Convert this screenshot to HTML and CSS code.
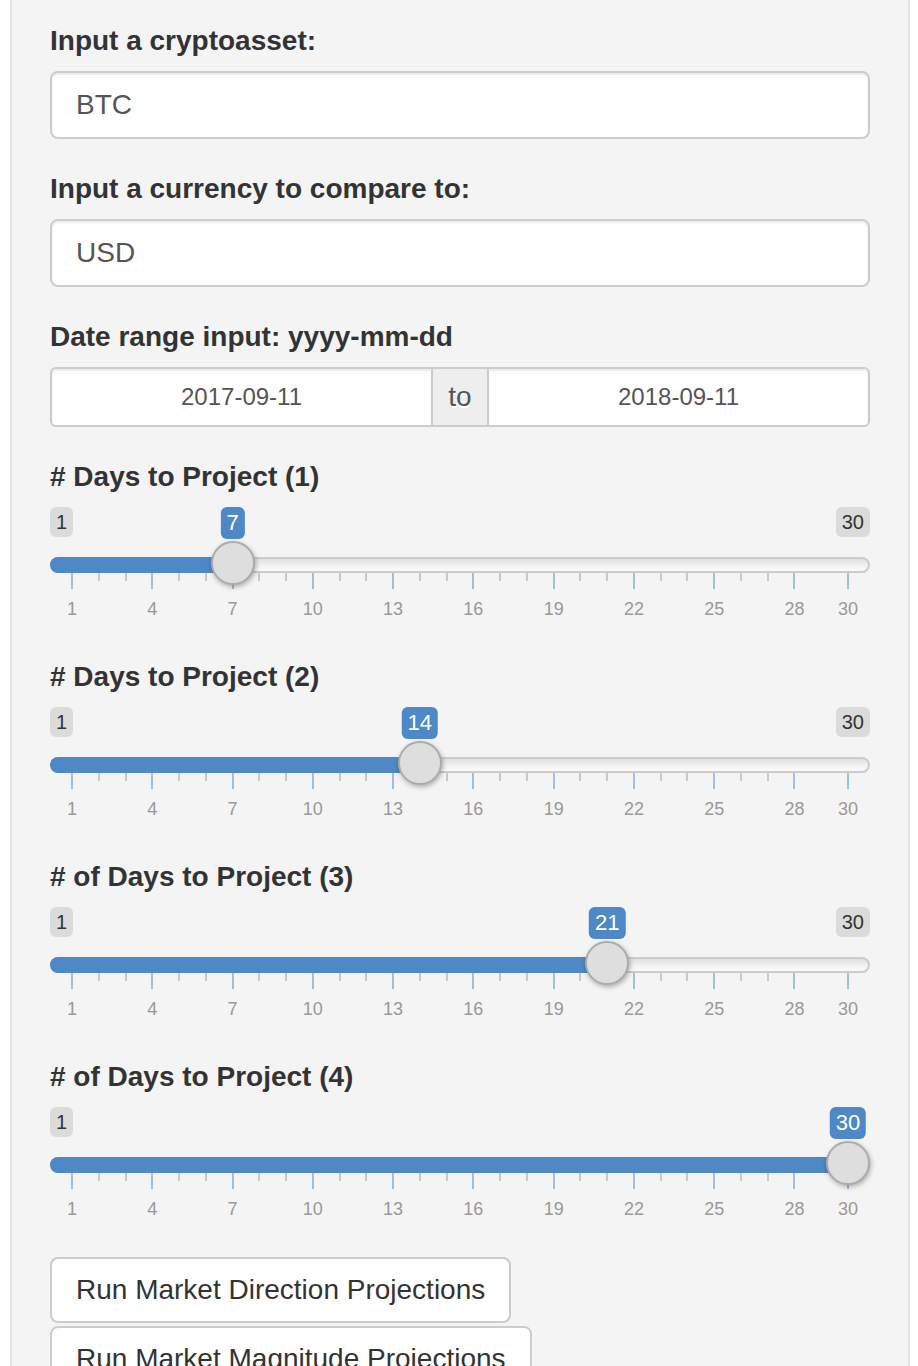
FILE: index.html
```html
<!DOCTYPE html>
<html lang="en">
<head>
<meta charset="utf-8">
<title>Crypto projections</title>
<link rel="stylesheet" href="styles.css">
</head>
<body>
<div class="well">
  <div class="form-group">
    <label class="control-label">Input a cryptoasset:</label>
    <div class="form-control">BTC</div>
  </div>
  <div class="form-group">
    <label class="control-label">Input a currency to compare to:</label>
    <div class="form-control">USD</div>
  </div>
  <div class="form-group">
    <label class="control-label">Date range input: yyyy-mm-dd</label>
    <div class="input-daterange">
      <div class="dr-input dr-first">2017-09-11</div>
      <span class="addon">to</span>
      <div class="dr-input dr-last">2018-09-11</div>
    </div>
  </div>

  <div class="form-group">
    <label class="control-label"># Days to Project (1)</label>
    <div class="irs" style="--v:7">
      <span class="irs-line"></span>
      <span class="irs-bar"></span>
      <span class="irs-min">1</span>
      <span class="irs-max">30</span>
      <span class="irs-grid">
        <span class="pol" style="--v:1"></span><span class="pol small" style="--v:2"></span><span class="pol small" style="--v:3"></span>
        <span class="pol" style="--v:4"></span><span class="pol small" style="--v:5"></span><span class="pol small" style="--v:6"></span>
        <span class="pol" style="--v:7"></span><span class="pol small" style="--v:8"></span><span class="pol small" style="--v:9"></span>
        <span class="pol" style="--v:10"></span><span class="pol small" style="--v:11"></span><span class="pol small" style="--v:12"></span>
        <span class="pol" style="--v:13"></span><span class="pol small" style="--v:14"></span><span class="pol small" style="--v:15"></span>
        <span class="pol" style="--v:16"></span><span class="pol small" style="--v:17"></span><span class="pol small" style="--v:18"></span>
        <span class="pol" style="--v:19"></span><span class="pol small" style="--v:20"></span><span class="pol small" style="--v:21"></span>
        <span class="pol" style="--v:22"></span><span class="pol small" style="--v:23"></span><span class="pol small" style="--v:24"></span>
        <span class="pol" style="--v:25"></span><span class="pol small" style="--v:26"></span><span class="pol small" style="--v:27"></span>
        <span class="pol" style="--v:28"></span><span class="pol" style="--v:30"></span>
        <span class="gt" style="--v:1">1</span><span class="gt" style="--v:4">4</span><span class="gt" style="--v:7">7</span>
        <span class="gt" style="--v:10">10</span><span class="gt" style="--v:13">13</span><span class="gt" style="--v:16">16</span>
        <span class="gt" style="--v:19">19</span><span class="gt" style="--v:22">22</span><span class="gt" style="--v:25">25</span>
        <span class="gt" style="--v:28">28</span><span class="gt" style="--v:30">30</span>
      </span>
      <span class="irs-slider"></span>
      <span class="irs-single">7</span>
    </div>
  </div>

  <div class="form-group">
    <label class="control-label"># Days to Project (2)</label>
    <div class="irs" style="--v:14">
      <span class="irs-line"></span>
      <span class="irs-bar"></span>
      <span class="irs-min">1</span>
      <span class="irs-max">30</span>
      <span class="irs-grid">
        <span class="pol" style="--v:1"></span><span class="pol small" style="--v:2"></span><span class="pol small" style="--v:3"></span>
        <span class="pol" style="--v:4"></span><span class="pol small" style="--v:5"></span><span class="pol small" style="--v:6"></span>
        <span class="pol" style="--v:7"></span><span class="pol small" style="--v:8"></span><span class="pol small" style="--v:9"></span>
        <span class="pol" style="--v:10"></span><span class="pol small" style="--v:11"></span><span class="pol small" style="--v:12"></span>
        <span class="pol" style="--v:13"></span><span class="pol small" style="--v:14"></span><span class="pol small" style="--v:15"></span>
        <span class="pol" style="--v:16"></span><span class="pol small" style="--v:17"></span><span class="pol small" style="--v:18"></span>
        <span class="pol" style="--v:19"></span><span class="pol small" style="--v:20"></span><span class="pol small" style="--v:21"></span>
        <span class="pol" style="--v:22"></span><span class="pol small" style="--v:23"></span><span class="pol small" style="--v:24"></span>
        <span class="pol" style="--v:25"></span><span class="pol small" style="--v:26"></span><span class="pol small" style="--v:27"></span>
        <span class="pol" style="--v:28"></span><span class="pol" style="--v:30"></span>
        <span class="gt" style="--v:1">1</span><span class="gt" style="--v:4">4</span><span class="gt" style="--v:7">7</span>
        <span class="gt" style="--v:10">10</span><span class="gt" style="--v:13">13</span><span class="gt" style="--v:16">16</span>
        <span class="gt" style="--v:19">19</span><span class="gt" style="--v:22">22</span><span class="gt" style="--v:25">25</span>
        <span class="gt" style="--v:28">28</span><span class="gt" style="--v:30">30</span>
      </span>
      <span class="irs-slider"></span>
      <span class="irs-single">14</span>
    </div>
  </div>

  <div class="form-group">
    <label class="control-label"># of Days to Project (3)</label>
    <div class="irs" style="--v:21">
      <span class="irs-line"></span>
      <span class="irs-bar"></span>
      <span class="irs-min">1</span>
      <span class="irs-max">30</span>
      <span class="irs-grid">
        <span class="pol" style="--v:1"></span><span class="pol small" style="--v:2"></span><span class="pol small" style="--v:3"></span>
        <span class="pol" style="--v:4"></span><span class="pol small" style="--v:5"></span><span class="pol small" style="--v:6"></span>
        <span class="pol" style="--v:7"></span><span class="pol small" style="--v:8"></span><span class="pol small" style="--v:9"></span>
        <span class="pol" style="--v:10"></span><span class="pol small" style="--v:11"></span><span class="pol small" style="--v:12"></span>
        <span class="pol" style="--v:13"></span><span class="pol small" style="--v:14"></span><span class="pol small" style="--v:15"></span>
        <span class="pol" style="--v:16"></span><span class="pol small" style="--v:17"></span><span class="pol small" style="--v:18"></span>
        <span class="pol" style="--v:19"></span><span class="pol small" style="--v:20"></span><span class="pol small" style="--v:21"></span>
        <span class="pol" style="--v:22"></span><span class="pol small" style="--v:23"></span><span class="pol small" style="--v:24"></span>
        <span class="pol" style="--v:25"></span><span class="pol small" style="--v:26"></span><span class="pol small" style="--v:27"></span>
        <span class="pol" style="--v:28"></span><span class="pol" style="--v:30"></span>
        <span class="gt" style="--v:1">1</span><span class="gt" style="--v:4">4</span><span class="gt" style="--v:7">7</span>
        <span class="gt" style="--v:10">10</span><span class="gt" style="--v:13">13</span><span class="gt" style="--v:16">16</span>
        <span class="gt" style="--v:19">19</span><span class="gt" style="--v:22">22</span><span class="gt" style="--v:25">25</span>
        <span class="gt" style="--v:28">28</span><span class="gt" style="--v:30">30</span>
      </span>
      <span class="irs-slider"></span>
      <span class="irs-single">21</span>
    </div>
  </div>

  <div class="form-group">
    <label class="control-label"># of Days to Project (4)</label>
    <div class="irs" style="--v:30">
      <span class="irs-line"></span>
      <span class="irs-bar"></span>
      <span class="irs-min">1</span>
      <span class="irs-grid">
        <span class="pol" style="--v:1"></span><span class="pol small" style="--v:2"></span><span class="pol small" style="--v:3"></span>
        <span class="pol" style="--v:4"></span><span class="pol small" style="--v:5"></span><span class="pol small" style="--v:6"></span>
        <span class="pol" style="--v:7"></span><span class="pol small" style="--v:8"></span><span class="pol small" style="--v:9"></span>
        <span class="pol" style="--v:10"></span><span class="pol small" style="--v:11"></span><span class="pol small" style="--v:12"></span>
        <span class="pol" style="--v:13"></span><span class="pol small" style="--v:14"></span><span class="pol small" style="--v:15"></span>
        <span class="pol" style="--v:16"></span><span class="pol small" style="--v:17"></span><span class="pol small" style="--v:18"></span>
        <span class="pol" style="--v:19"></span><span class="pol small" style="--v:20"></span><span class="pol small" style="--v:21"></span>
        <span class="pol" style="--v:22"></span><span class="pol small" style="--v:23"></span><span class="pol small" style="--v:24"></span>
        <span class="pol" style="--v:25"></span><span class="pol small" style="--v:26"></span><span class="pol small" style="--v:27"></span>
        <span class="pol" style="--v:28"></span><span class="pol" style="--v:30"></span>
        <span class="gt" style="--v:1">1</span><span class="gt" style="--v:4">4</span><span class="gt" style="--v:7">7</span>
        <span class="gt" style="--v:10">10</span><span class="gt" style="--v:13">13</span><span class="gt" style="--v:16">16</span>
        <span class="gt" style="--v:19">19</span><span class="gt" style="--v:22">22</span><span class="gt" style="--v:25">25</span>
        <span class="gt" style="--v:28">28</span><span class="gt" style="--v:30">30</span>
      </span>
      <span class="irs-slider"></span>
      <span class="irs-single">30</span>
    </div>
  </div>

  <div class="actions">
    <button class="btn" type="button">Run Market Direction Projections</button>
    <button class="btn" type="button">Run Market Magnitude Projections</button>
  </div>
</div>
</body>
</html>
```

FILE: styles.css
```css
html, body {
  margin: 0;
  padding: 0;
  background: #ffffff;
}

body {
  font-family: "Liberation Sans", Arial, Helvetica, sans-serif;
  color: #333333;
}

.well {
  margin: 0 8px 0 10px;
  padding: 21px 38px 0 38px;
  background: #f4f4f4;
  border: 2px solid #e3e3e3;
  border-top: none;
  min-height: 1500px;
  box-sizing: border-box;
}

.form-group {
  margin-bottom: 30px;
}

.control-label {
  display: block;
  font-weight: bold;
  font-size: 28px;
  line-height: 40px;
  margin-bottom: 10px;
  color: #333333;
}

.form-control {
  box-sizing: border-box;
  height: 68px;
  padding: 0 24px;
  line-height: 64px;
  font-size: 28px;
  color: #555555;
  background: #ffffff;
  border: 2px solid #cccccc;
  border-radius: 8px;
  box-shadow: inset 0 2px 2px rgba(0, 0, 0, 0.075);
}

/* date range */
.input-daterange {
  display: flex;
  height: 60px;
}

.dr-input {
  flex: 1;
  box-sizing: border-box;
  height: 60px;
  line-height: 56px;
  text-align: center;
  font-size: 24px;
  color: #555555;
  background: #ffffff;
  border: 2px solid #cccccc;
  box-shadow: inset 0 2px 2px rgba(0, 0, 0, 0.075);
}

.dr-first {
  border-right: none;
  border-radius: 6px 0 0 6px;
}

.dr-last {
  border-left: none;
  border-radius: 0 6px 6px 0;
}

.addon {
  box-sizing: border-box;
  width: 58px;
  height: 60px;
  line-height: 56px;
  text-align: center;
  font-size: 28px;
  color: #555555;
  background: #eeeeee;
  border: 2px solid #cccccc;
  text-shadow: 0 2px 0 #ffffff;
}

/* ion range slider (shiny skin, 2x) */
.irs {
  position: relative;
  height: 120px;
}

.irs-line {
  position: absolute;
  left: 0;
  right: 0;
  top: 50px;
  height: 16px;
  box-sizing: border-box;
  border: 2px solid #cccccc;
  border-radius: 16px;
  background: linear-gradient(to bottom, #e0e0e0 0%, #f3f3f3 60%, #fbfbfb 100%);
}

.irs-bar {
  position: absolute;
  left: 0;
  top: 50px;
  height: 16px;
  width: calc((100% - 44px) * (var(--v) - 1) / 29 + 22px);
  background: #4f88c6;
  border-radius: 8px 0 0 8px;
}

.irs-min,
.irs-max,
.irs-single {
  position: absolute;
  top: 0;
  padding: 2px 6px;
  border-radius: 6px;
  white-space: nowrap;
}

.irs-min,
.irs-max {
  font-size: 20px;
  line-height: 26px;
  color: #333333;
  background: rgba(0, 0, 0, 0.1);
}

.irs-min {
  left: 0;
}

.irs-max {
  right: 0;
}

.irs-single {
  left: calc((100% - 44px) * (var(--v) - 1) / 29 + 22px);
  transform: translateX(-50%);
  font-size: 22px;
  line-height: 28px;
  color: #ffffff;
  background: #4f88c6;
}

.irs-slider {
  position: absolute;
  top: 34px;
  left: calc((100% - 44px) * (var(--v) - 1) / 29);
  width: 44px;
  height: 44px;
  box-sizing: border-box;
  border: 2px solid #acacac;
  border-radius: 50%;
  background: #dedede;
  box-shadow: 1px 2px 5px rgba(0, 0, 0, 0.3);
}

.irs-grid {
  position: absolute;
  left: 21px;
  right: 23px;
  top: 66px;
  height: 54px;
}

.pol {
  position: absolute;
  top: 0;
  left: calc((var(--v) - 1) / 29 * 100%);
  width: 2px;
  height: 16px;
  background: #a2bedd;
}

.pol.small {
  height: 8px;
  background: #c8c8c8;
}

.gt {
  position: absolute;
  top: 27px;
  left: calc((var(--v) - 1) / 29 * 100% + 1px);
  transform: translateX(-50%);
  font-size: 18px;
  line-height: 18px;
  color: #999999;
  white-space: nowrap;
}

/* buttons */
.actions {
  display: flex;
  flex-direction: column;
  align-items: flex-start;
  gap: 3px;
}

.btn {
  font-family: inherit;
  font-size: 28px;
  line-height: 40px;
  padding: 11px 24px;
  color: #333333;
  background: #ffffff;
  border: 2px solid #cccccc;
  border-radius: 8px;
  cursor: pointer;
}
```
